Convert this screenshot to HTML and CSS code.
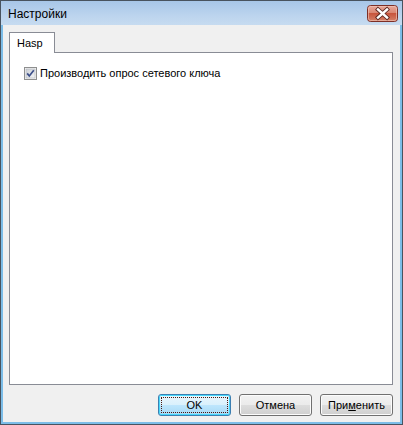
FILE: index.html
```html
<!DOCTYPE html>
<html lang="ru">
<head>
<meta charset="utf-8">
<link rel="stylesheet" href="styles.css">
</head>
<body>
<div class="window">
  <div class="titlebar">
    <span class="title">Настройки</span>
    <div class="close">
      <svg width="31" height="17" viewBox="0 0 31 17">
        <defs>
          <linearGradient id="cg" x1="0" y1="0" x2="0" y2="1">
            <stop offset="0" stop-color="#e9a99b"/>
            <stop offset="0.45" stop-color="#d98773"/>
            <stop offset="0.5" stop-color="#c8553d"/>
            <stop offset="1" stop-color="#d4826a"/>
          </linearGradient>
        </defs>
        <rect x="0.5" y="0.5" width="30" height="16" rx="3" fill="url(#cg)" stroke="#7d2f26"/>
        <rect x="1.5" y="1.5" width="28" height="14" rx="2" fill="none" stroke="#f3c9bd" stroke-opacity="0.6"/>
        <path d="M11 4.5 L20 12.5 M20 4.5 L11 12.5" stroke="#5a2620" stroke-width="4.2" stroke-linecap="square"/>
        <path d="M11 4.5 L20 12.5 M20 4.5 L11 12.5" stroke="#ffffff" stroke-width="2.4" stroke-linecap="square"/>
      </svg>
    </div>
  </div>
  <div class="client">
    <div class="tabs">
      <div class="tab">Hasp</div>
    </div>
    <div class="panel">
      <label class="check">
        <svg class="box" width="13" height="13" viewBox="0 0 13 13">
          <defs>
            <linearGradient id="bg" x1="0" y1="0" x2="1" y2="1">
              <stop offset="0" stop-color="#cbcfd5"/>
              <stop offset="1" stop-color="#f4f5f6"/>
            </linearGradient>
          </defs>
          <rect x="0.5" y="0.5" width="12" height="12" fill="#f4f4f4" stroke="#8e8f8f"/>
          <rect x="2" y="2" width="9" height="9" fill="url(#bg)" stroke="#aeb3b9" stroke-width="0.6"/>
          <path d="M3.2 6.4 L5.3 9 L9.8 3.2" fill="none" stroke="#3c4f8a" stroke-width="1.7"/>
        </svg>
        <span class="label">Производить опрос сетевого ключа</span>
      </label>
    </div>
    <div class="footer">
      <button class="btn default"><span class="focus">OK</span></button>
      <button class="btn">Отмена</button>
      <button class="btn">При<u>м</u>енить</button>
    </div>
  </div>
</div>
</body>
</html>
```
FILE: styles.css
```css
html, body {
  margin: 0;
  padding: 0;
}
body {
  width: 403px;
  height: 425px;
  overflow: hidden;
  font-family: "Liberation Sans", Arial, sans-serif;
  font-size: 11px;
  color: #000;
}
.window {
  width: 403px;
  height: 425px;
  box-sizing: border-box;
  border: 1px solid #48535f;
  display: flex;
  flex-direction: column;
  background: #f0f0f0;
}
.titlebar {
  height: 24px;
  flex: none;
  display: flex;
  align-items: flex-start;
  padding: 0 4px 0 7px;
  background: linear-gradient(#a7c6e8, #bcd4ee 60%, #c6dbf0);
}
.title {
  font-size: 12px;
  line-height: 12px;
  margin-top: 7px;
  color: #000;
}
.close {
  margin-left: auto;
  margin-top: 4px;
  width: 31px;
  height: 17px;
}
.close svg {
  display: block;
}
.client {
  flex: 1;
  display: flex;
  flex-direction: column;
  background: #f0f0f0;
  border: 2px solid #7cbde8;
  border-top: 0;
  padding: 7px 7px 6px 6px;
}
.tabs {
  height: 20px;
  flex: none;
  display: flex;
  position: relative;
  z-index: 1;
}
.tab {
  width: 46px;
  height: 21px;
  box-sizing: border-box;
  border: 1px solid #898c95;
  border-bottom: 0;
  background: #fff;
  padding-left: 7px;
  line-height: 20px;
}
.panel {
  flex: 1;
  background: #fff;
  border: 1px solid #898c95;
  padding: 14px 0 0 14px;
}
.check {
  display: flex;
  align-items: center;
  height: 13px;
}
.box {
  display: block;
  flex: none;
}
.label {
  margin-left: 3px;
  line-height: 13px;
}
.footer {
  flex: none;
  display: flex;
  justify-content: flex-end;
  gap: 8px;
  margin-top: 9px;
  height: 22px;
}
.btn {
  width: 73px;
  height: 22px;
  box-sizing: border-box;
  margin: 0;
  padding: 0;
  font-family: "Liberation Sans", Arial, sans-serif;
  font-size: 11px;
  color: #000;
  border: 1px solid #707070;
  border-radius: 3px;
  background: linear-gradient(#f2f2f2, #ebebeb 50%, #dddddd 50%, #cfcfcf);
  box-shadow: inset 0 0 0 1px #fcfcfc;
}
.btn.default {
  border-color: #3c7fb1;
  background: linear-gradient(#eaf6fd, #d9f0fc 50%, #bee6fd 50%, #a7d9f5);
  box-shadow: inset 0 0 0 1px #48d8fb;
  padding: 2px;
}
.focus {
  display: flex;
  align-items: center;
  justify-content: center;
  height: 100%;
  box-sizing: border-box;
  border: 1px dotted #4a1a10;
}
```
